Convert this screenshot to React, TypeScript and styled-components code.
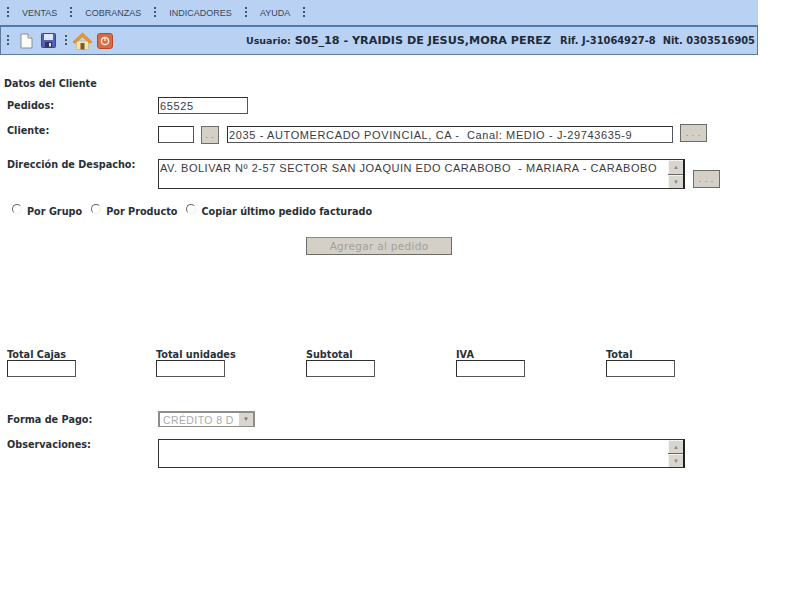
import { Fragment } from "react";
import styled, { createGlobalStyle } from "styled-components";

const GlobalStyle = createGlobalStyle`
  html, body {
    margin: 0;
    padding: 0;
    background: #fff;
    font-family: "DejaVu Sans", Verdana, sans-serif;
  }
`;

const Page = styled.div`
  width: 788px;
  height: 600px;
  overflow: hidden;
  background: #fff;
  color: #222;
`;

const Header = styled.header`
  width: 758px;
  background: #b9d2f4;
`;

const MenuBar = styled.nav`
  height: 25px;
  display: flex;
  align-items: center;
  padding-left: 7px;
  box-sizing: border-box;
`;

const MenuItem = styled.span`
  font-family: "Liberation Sans", Arial, sans-serif;
  font-size: 9px;
  color: #3a4658;
  margin: 0 13px;
`;

const Grip = styled.span<{ $left?: number }>`
  width: 2px;
  height: 11px;
  flex: none;
  margin-left: ${(p) => p.$left ?? 0}px;
  background-image: linear-gradient(#3c5a7c 50%, transparent 50%);
  background-size: 2px 4px;
`;

const ToolBar = styled.div`
  height: 30px;
  box-sizing: border-box;
  border: 1px solid #5b7a9c;
  border-top: 2px solid #4f79a8;
  display: flex;
  align-items: center;
  padding: 0 2px 0 6px;
`;

const IconSlot = styled.svg<{ $left?: number }>`
  flex: none;
  margin-left: ${(p) => p.$left ?? 0}px;
`;

const UserInfo = styled.div`
  margin-left: auto;
  display: flex;
  align-items: baseline;
  font-weight: bold;
  color: #1d2a3a;
  white-space: nowrap;
`;

const UserLabel = styled.span`
  font-size: 9.5px;
`;

const UserName = styled.span`
  font-size: 11.2px;
  margin: 0 2px 0 4px;
`;

const Fiscal = styled.span`
  font-size: 9.9px;
  margin-left: 7px;
`;

const Content = styled.main`
  padding: 23px 0 0 7px;
`;

const Heading = styled.h2`
  margin: 0 0 7px -3px;
  font-size: 9.6px;
  line-height: 12px;
  font-weight: bold;
  color: #2a3038;
`;

const Row = styled.div<{ $height: number }>`
  display: flex;
  align-items: flex-start;
  height: ${(p) => p.$height}px;
`;

const RowLabel = styled.label<{ $top?: number }>`
  width: 151px;
  flex: none;
  padding-top: ${(p) => p.$top ?? 0}px;
  font-size: 9.7px;
  line-height: 12px;
  font-weight: bold;
  color: #2a3038;
`;

const TextField = styled.div<{ $width: number; $left?: number; $top?: number }>`
  width: ${(p) => p.$width}px;
  height: 17px;
  margin: ${(p) => p.$top ?? 0}px 0 0 ${(p) => p.$left ?? 0}px;
  flex: none;
  box-sizing: border-box;
  border: 1px solid #2f2f2f;
  border-right-color: #555;
  border-bottom-color: #555;
  padding: 0 1px;
  font-family: "Liberation Sans", Arial, sans-serif;
  font-size: 11px;
  letter-spacing: 0.62px;
  line-height: 16px;
  color: #3a3a44;
  white-space: pre;
  overflow: hidden;
  background: #fff;
`;

const DotsButton = styled.button<{ $width: number; $left: number; $top?: number }>`
  width: ${(p) => p.$width}px;
  height: 18px;
  margin: ${(p) => p.$top ?? 0}px 0 0 ${(p) => p.$left}px;
  padding: 0 0 0 2px;
  flex: none;
  border: 1px solid #6d6d68;
  background: #d4d0c8;
  color: #85837c;
  font-family: "DejaVu Sans", sans-serif;
  font-size: 9px;
  letter-spacing: 3px;
  line-height: 16px;
`;

const TextArea = styled.div<{ $height: number }>`
  position: relative;
  width: 527px;
  height: ${(p) => p.$height}px;
  flex: none;
  box-sizing: border-box;
  border: 1px solid #333;
  border-right: 2px solid #222;
  padding: 1px 1px;
  font-family: "Liberation Sans", Arial, sans-serif;
  font-size: 11px;
  letter-spacing: 0.52px;
  line-height: 14px;
  color: #3a3a44;
  white-space: pre;
`;

const ScrollBar = styled.div`
  position: absolute;
  top: 0;
  right: 0;
  bottom: 0;
  width: 15px;
  display: flex;
  flex-direction: column;
  gap: 1px;
  background: #666;
`;

const ScrollArrow = styled.div`
  flex: 1;
  background: #d8d6cf;
  border-top: 1px solid #f4f3ee;
  border-left: 1px solid #f4f3ee;
  color: #888;
  font-size: 6px;
  letter-spacing: 0;
  line-height: 12px;
  text-align: center;
`;

const RadioRow = styled.div`
  display: flex;
  align-items: center;
  height: 14px;
  margin: 15px 0 0 5px;
`;

const RadioOption = styled.label`
  display: flex;
  align-items: center;
  margin-right: 9px;
  font-size: 9.7px;
  font-weight: bold;
  color: #2a3038;
`;

const RadioMark = styled.span`
  width: 10px;
  height: 10px;
  margin: -4px 5px 0 0;
  box-sizing: border-box;
  border-radius: 50%;
  border: 1px solid #eee;
  border-top-color: #666;
  border-left-color: #666;
`;

const SubmitWrap = styled.div`
  display: flex;
  margin: 19px 0 0 299px;
`;

const SubmitButton = styled.button`
  width: 146px;
  height: 18px;
  padding: 0;
  border: 1px solid #6d6d68;
  border-top-color: #8a8a84;
  background: #d4d0c8;
  color: #a3a199;
  font-family: "DejaVu Sans", sans-serif;
  font-size: 10.5px;
  letter-spacing: 0.3px;
  line-height: 15px;
`;

const Totals = styled.section`
  display: grid;
  grid-template-columns: 149px 150px 150px 150px 150px;
  margin-top: 95px;
`;

const TotalCell = styled.div`
  display: flex;
  flex-direction: column;
`;

const TotalLabel = styled.span`
  font-size: 9.7px;
  line-height: 10px;
  font-weight: bold;
  color: #2a3038;
`;

const SelectBox = styled.div`
  width: 97px;
  height: 16px;
  flex: none;
  box-sizing: border-box;
  border: 2px solid #8e8e88;
  border-bottom-width: 1px;
  display: flex;
  align-items: center;
  justify-content: space-between;
  padding-left: 3px;
  font-family: "Liberation Sans", Arial, sans-serif;
  font-size: 10.5px;
  letter-spacing: 0.4px;
  color: #aaa;
`;

const SelectArrow = styled.span`
  width: 14px;
  height: 13px;
  background: #d8d6cf;
  color: #777;
  font-size: 6px;
  letter-spacing: 0;
  line-height: 13px;
  text-align: center;
`;

const PaymentRow = styled(Row)`
  margin-top: 34px;
`;

function PageIcon() {
  return (
    <IconSlot $left={11} width="13" height="16" viewBox="0 0 13 16">
      <path d="M1 1h7l4 4v10H1z" fill="#fdfdf6" stroke="#8a8f96" />
      <path d="M8 1v4h4" fill="#e4e6e8" stroke="#8a8f96" />
    </IconSlot>
  );
}

function SaveIcon() {
  return (
    <IconSlot $left={8} width="15" height="15" viewBox="0 0 15 15">
      <rect x="0.5" y="0.5" width="14" height="14" rx="1" fill="#5560b8" stroke="#3d4790" />
      <rect x="3" y="1" width="9" height="6" fill="#dfe6f5" />
      <rect x="4" y="9" width="7" height="5.5" fill="#2c3560" />
      <rect x="8" y="10" width="2" height="3.5" fill="#dfe6f5" />
    </IconSlot>
  );
}

function HomeIcon() {
  return (
    <IconSlot $left={5} width="21" height="18" viewBox="0 0 20 18">
      <path d="M4 9h12v8.5H4z" fill="#f7e3ae" stroke="#c9a860" strokeWidth="0.6" />
      <rect x="8" y="11" width="4" height="6.5" fill="#7d5a2d" />
      <path d="M0.5 10 10 1l9.5 9-2 1.2L10 4.4 2.5 11.2z" fill="#ee9a1e" stroke="#c8740f" strokeWidth="0.6" />
    </IconSlot>
  );
}

function PowerIcon() {
  return (
    <IconSlot $left={4} width="16" height="16" viewBox="0 0 16 16">
      <rect x="0.5" y="0.5" width="15" height="15" rx="2.5" fill="#dc6a45" stroke="#b5482a" />
      <circle cx="8" cy="8" r="3.6" fill="none" stroke="#fbe9dc" strokeWidth="1.5" />
      <path d="M8 4v4" stroke="#fbe9dc" strokeWidth="1.5" />
    </IconSlot>
  );
}

function FieldScroll() {
  return (
    <ScrollBar>
      <ScrollArrow>▲</ScrollArrow>
      <ScrollArrow>▼</ScrollArrow>
    </ScrollBar>
  );
}

const menuItems = ["VENTAS", "COBRANZAS", "INDICADORES", "AYUDA"];
const totals = ["Total Cajas", "Total unidades", "Subtotal", "IVA", "Total"];
const radios = ["Por Grupo", "Por Producto", "Copiar último pedido facturado"];

export default function App() {
  return (
    <Page>
      <GlobalStyle />
      <Header>
        <MenuBar>
          <Grip />
          {menuItems.map((item) => (
            <Fragment key={item}>
              <MenuItem>{item}</MenuItem>
              <Grip />
            </Fragment>
          ))}
        </MenuBar>
        <ToolBar>
          <Grip />
          <PageIcon />
          <SaveIcon />
          <Grip $left={9} />
          <HomeIcon />
          <PowerIcon />
          <UserInfo>
            <UserLabel>Usuario:</UserLabel>
            <UserName>S05_18 - YRAIDIS DE JESUS,MORA PEREZ</UserName>
            <Fiscal>Rif. J-31064927-8</Fiscal>
            <Fiscal>Nit. 0303516905</Fiscal>
          </UserInfo>
        </ToolBar>
      </Header>
      <Content>
        <Heading>Datos del Cliente</Heading>
        <Row $height={27}>
          <RowLabel $top={3}>Pedidos:</RowLabel>
          <TextField $width={90}>65525</TextField>
        </Row>
        <Row $height={35}>
          <RowLabel $top={1}>Cliente:</RowLabel>
          <TextField $width={36} $top={2} />
          <DotsButton $width={18} $left={7} $top={2}>..</DotsButton>
          <TextField $width={446} $left={8} $top={2}>
            2035 - AUTOMERCADO POVINCIAL, CA -  Canal: MEDIO - J-29743635-9
          </TextField>
          <DotsButton $width={27} $left={7}>...</DotsButton>
        </Row>
        <Row $height={30}>
          <RowLabel>Dirección de Despacho:</RowLabel>
          <TextArea $height={30}>
            AV. BOLIVAR Nº 2-57 SECTOR SAN JOAQUIN EDO CARABOBO  - MARIARA - CARABOBO
            <FieldScroll />
          </TextArea>
          <DotsButton $width={27} $left={8} $top={11}>...</DotsButton>
        </Row>
        <RadioRow>
          {radios.map((radio) => (
            <RadioOption key={radio}>
              <RadioMark />
              {radio}
            </RadioOption>
          ))}
        </RadioRow>
        <SubmitWrap>
          <SubmitButton>Agregar al pedido</SubmitButton>
        </SubmitWrap>
        <Totals>
          {totals.map((total) => (
            <TotalCell key={total}>
              <TotalLabel>{total}</TotalLabel>
              <TextField $width={69} />
            </TotalCell>
          ))}
        </Totals>
        <PaymentRow $height={28}>
          <RowLabel $top={3}>Forma de Pago:</RowLabel>
          <SelectBox>
            CRÉDITO 8 D
            <SelectArrow>▼</SelectArrow>
          </SelectBox>
        </PaymentRow>
        <Row $height={29}>
          <RowLabel>Observaciones:</RowLabel>
          <TextArea $height={29}>
            <FieldScroll />
          </TextArea>
        </Row>
      </Content>
    </Page>
  );
}
